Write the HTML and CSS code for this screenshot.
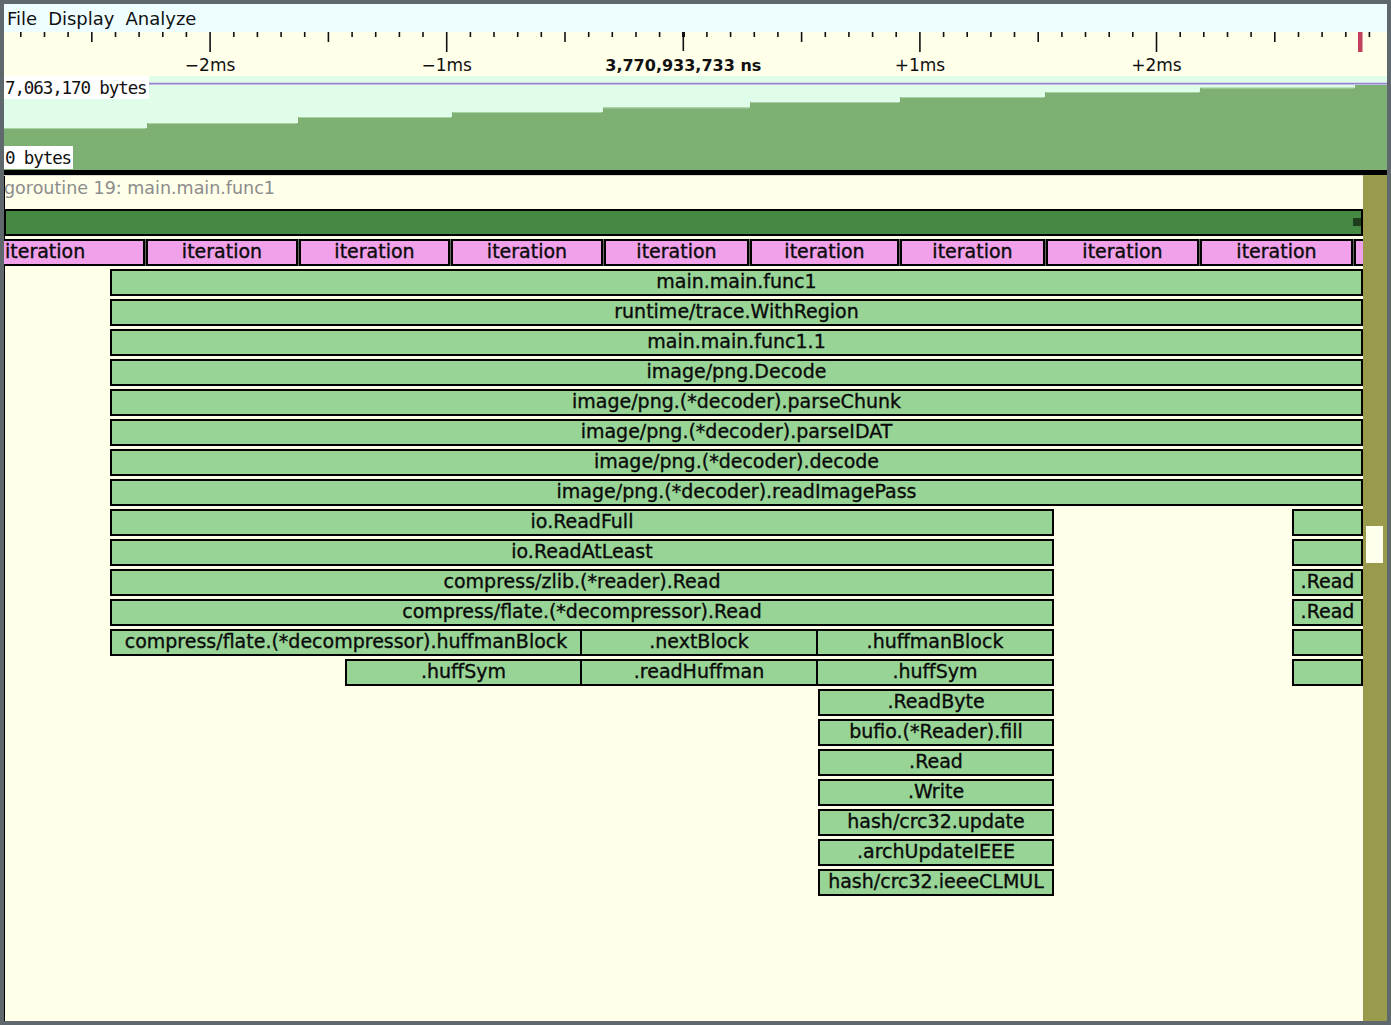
FILE: index.html
```html
<!DOCTYPE html>
<html>
<head>
<meta charset="utf-8">
<title>gotraceui</title>
<link rel="stylesheet" href="styles.css">
</head>
<body>
<div class="win">
  <div class="menu"><span>File</span><span>Display</span><span>Analyze</span></div>
  <div class="ruler">
    <svg class="ticks" width="1383" height="44" viewBox="0 0 1383 44">
      <g class="tk">
        <line x1="16.8" y1="0" x2="16.8" y2="5"/>
        <line x1="40.5" y1="0" x2="40.5" y2="5"/>
        <line x1="64.1" y1="0" x2="64.1" y2="5"/>
        <line x1="87.8" y1="0" x2="87.8" y2="10"/>
        <line x1="111.5" y1="0" x2="111.5" y2="5"/>
        <line x1="135.1" y1="0" x2="135.1" y2="5"/>
        <line x1="158.8" y1="0" x2="158.8" y2="5"/>
        <line x1="182.4" y1="0" x2="182.4" y2="5"/>
        <line x1="206.1" y1="0" x2="206.1" y2="20"/>
        <line x1="229.8" y1="0" x2="229.8" y2="5"/>
        <line x1="253.4" y1="0" x2="253.4" y2="5"/>
        <line x1="277.1" y1="0" x2="277.1" y2="5"/>
        <line x1="300.7" y1="0" x2="300.7" y2="5"/>
        <line x1="324.4" y1="0" x2="324.4" y2="10"/>
        <line x1="348.1" y1="0" x2="348.1" y2="5"/>
        <line x1="371.7" y1="0" x2="371.7" y2="5"/>
        <line x1="395.4" y1="0" x2="395.4" y2="5"/>
        <line x1="419.0" y1="0" x2="419.0" y2="5"/>
        <line x1="442.7" y1="0" x2="442.7" y2="20"/>
        <line x1="466.4" y1="0" x2="466.4" y2="5"/>
        <line x1="490.0" y1="0" x2="490.0" y2="5"/>
        <line x1="513.7" y1="0" x2="513.7" y2="5"/>
        <line x1="537.3" y1="0" x2="537.3" y2="5"/>
        <line x1="561.0" y1="0" x2="561.0" y2="10"/>
        <line x1="584.7" y1="0" x2="584.7" y2="5"/>
        <line x1="608.3" y1="0" x2="608.3" y2="5"/>
        <line x1="632.0" y1="0" x2="632.0" y2="5"/>
        <line x1="655.6" y1="0" x2="655.6" y2="5"/>
        <line x1="679.3" y1="0" x2="679.3" y2="19"/>
        <line x1="702.9" y1="0" x2="702.9" y2="5"/>
        <line x1="726.6" y1="0" x2="726.6" y2="5"/>
        <line x1="750.3" y1="0" x2="750.3" y2="5"/>
        <line x1="773.9" y1="0" x2="773.9" y2="5"/>
        <line x1="797.6" y1="0" x2="797.6" y2="10"/>
        <line x1="821.3" y1="0" x2="821.3" y2="5"/>
        <line x1="844.9" y1="0" x2="844.9" y2="5"/>
        <line x1="868.6" y1="0" x2="868.6" y2="5"/>
        <line x1="892.2" y1="0" x2="892.2" y2="5"/>
        <line x1="915.9" y1="0" x2="915.9" y2="20"/>
        <line x1="939.6" y1="0" x2="939.6" y2="5"/>
        <line x1="963.2" y1="0" x2="963.2" y2="5"/>
        <line x1="986.9" y1="0" x2="986.9" y2="5"/>
        <line x1="1010.5" y1="0" x2="1010.5" y2="5"/>
        <line x1="1034.2" y1="0" x2="1034.2" y2="10"/>
        <line x1="1057.9" y1="0" x2="1057.9" y2="5"/>
        <line x1="1081.5" y1="0" x2="1081.5" y2="5"/>
        <line x1="1105.2" y1="0" x2="1105.2" y2="5"/>
        <line x1="1128.8" y1="0" x2="1128.8" y2="5"/>
        <line x1="1152.5" y1="0" x2="1152.5" y2="20"/>
        <line x1="1176.2" y1="0" x2="1176.2" y2="5"/>
        <line x1="1199.8" y1="0" x2="1199.8" y2="5"/>
        <line x1="1223.5" y1="0" x2="1223.5" y2="5"/>
        <line x1="1247.1" y1="0" x2="1247.1" y2="5"/>
        <line x1="1270.8" y1="0" x2="1270.8" y2="10"/>
        <line x1="1294.5" y1="0" x2="1294.5" y2="5"/>
        <line x1="1318.1" y1="0" x2="1318.1" y2="5"/>
        <line x1="1341.8" y1="0" x2="1341.8" y2="5"/>
        <line x1="1365.4" y1="0" x2="1365.4" y2="5"/>
      </g>
      <rect class="center-tick" x="678" y="0" width="3" height="5"/>
      <rect class="marker" x="1354" y="0" width="4.5" height="20"/>
      <text class="rl" x="206.1" y="39">−2ms</text>
      <text class="rl" x="442.7" y="39">−1ms</text>
      <text class="rl rl-bold" x="679.3" y="39">3,770,933,733 ns</text>
      <text class="rl" x="915.9" y="39">+1ms</text>
      <text class="rl" x="1152.5" y="39">+2ms</text>
    </svg>
  </div>
  <div class="mem">
    <svg class="memsvg" width="1383" height="94" viewBox="0 0 1383 94">
      <line class="limit" x1="0" y1="7.6" x2="1383" y2="7.6"/>
      <polygon class="heap" points="0,52 143,52 143,47 294,47 294,41 448,41 448,36 599,36 599,31.5 746,31.5 746,26 896,26 896,21 1041,21 1041,16 1196,16 1196,11.7 1351,11.7 1351,9 1383,9 1383,94 0,94"/>
      <line class="heaptop" x1="0" y1="52.5" x2="142" y2="52.5"/>
      <line class="heaptop" x1="144" y1="47.5" x2="293" y2="47.5"/>
      <line class="heaptop" x1="295" y1="41.5" x2="447" y2="41.5"/>
      <line class="heaptop" x1="449" y1="36.5" x2="598" y2="36.5"/>
      <line class="heaptop" x1="600" y1="32" x2="745" y2="32"/>
      <line class="heaptop" x1="747" y1="26.5" x2="895" y2="26.5"/>
      <line class="heaptop" x1="897" y1="21.5" x2="1040" y2="21.5"/>
      <line class="heaptop" x1="1042" y1="16.5" x2="1195" y2="16.5"/>
      <line class="heaptop" x1="1197" y1="12.2" x2="1350" y2="12.2"/>
    </svg>
    <span class="memlabel top">7,063,170 bytes</span>
    <span class="memlabel bottom">0 bytes</span>
  </div>
  <div class="sep"></div>
  <div class="main">
    <div class="canvas">
      <div class="glabel">goroutine 19: main.main.func1</div>
      <div class="tracks">
        <div class="row"><div class="state" style="left:0;width:1359px"><span class="dot"></span></div></div>
        <div class="row iters">
          <div class="it first" style="left:0;width:141px">iteration</div>
          <div class="it" style="left:142px;width:152px">iteration</div>
          <div class="it" style="left:295px;width:151px">iteration</div>
          <div class="it" style="left:447px;width:152px">iteration</div>
          <div class="it" style="left:600px;width:145px">iteration</div>
          <div class="it" style="left:746px;width:149px">iteration</div>
          <div class="it" style="left:896px;width:145px">iteration</div>
          <div class="it" style="left:1042px;width:153px">iteration</div>
          <div class="it" style="left:1196px;width:153px">iteration</div>
          <div class="it" style="left:1350px;width:60px"></div>
        </div>
        <div class="row"><div class="sp" style="left:106px;width:1253px">main.main.func1</div></div>
        <div class="row"><div class="sp" style="left:106px;width:1253px">runtime/trace.WithRegion</div></div>
        <div class="row"><div class="sp" style="left:106px;width:1253px">main.main.func1.1</div></div>
        <div class="row"><div class="sp" style="left:106px;width:1253px">image/png.Decode</div></div>
        <div class="row"><div class="sp" style="left:106px;width:1253px">image/png.(*decoder).parseChunk</div></div>
        <div class="row"><div class="sp" style="left:106px;width:1253px">image/png.(*decoder).parseIDAT</div></div>
        <div class="row"><div class="sp" style="left:106px;width:1253px">image/png.(*decoder).decode</div></div>
        <div class="row"><div class="sp" style="left:106px;width:1253px">image/png.(*decoder).readImagePass</div></div>
        <div class="row">
          <div class="sp" style="left:106px;width:944px">io.ReadFull</div>
          <div class="sp" style="left:1288px;width:71px"></div>
        </div>
        <div class="row">
          <div class="sp" style="left:106px;width:944px">io.ReadAtLeast</div>
          <div class="sp" style="left:1288px;width:71px"></div>
        </div>
        <div class="row">
          <div class="sp" style="left:106px;width:944px">compress/zlib.(*reader).Read</div>
          <div class="sp" style="left:1288px;width:71px">.Read</div>
        </div>
        <div class="row">
          <div class="sp" style="left:106px;width:944px">compress/flate.(*decompressor).Read</div>
          <div class="sp" style="left:1288px;width:71px">.Read</div>
        </div>
        <div class="row">
          <div class="sp" style="left:106px;width:472px">compress/flate.(*decompressor).huffmanBlock</div>
          <div class="sp" style="left:576px;width:238px">.nextBlock</div>
          <div class="sp" style="left:812px;width:238px">.huffmanBlock</div>
          <div class="sp" style="left:1288px;width:71px"></div>
        </div>
        <div class="row">
          <div class="sp" style="left:341px;width:237px">.huffSym</div>
          <div class="sp" style="left:576px;width:238px">.readHuffman</div>
          <div class="sp" style="left:812px;width:238px">.huffSym</div>
          <div class="sp" style="left:1288px;width:71px"></div>
        </div>
        <div class="row"><div class="sp" style="left:814px;width:236px">.ReadByte</div></div>
        <div class="row"><div class="sp" style="left:814px;width:236px">bufio.(*Reader).fill</div></div>
        <div class="row"><div class="sp" style="left:814px;width:236px">.Read</div></div>
        <div class="row"><div class="sp" style="left:814px;width:236px">.Write</div></div>
        <div class="row"><div class="sp" style="left:814px;width:236px">hash/crc32.update</div></div>
        <div class="row"><div class="sp" style="left:814px;width:236px">.archUpdateIEEE</div></div>
        <div class="row"><div class="sp" style="left:814px;width:236px">hash/crc32.ieeeCLMUL</div></div>
      </div>
    </div>
    <div class="scroll"><div class="thumb"></div></div>
  </div>
</div>
</body>
</html>
```
FILE: styles.css
```css
html, body {
  margin: 0;
  padding: 0;
  background: #5f686c;
}
body {
  width: 1391px;
  height: 1025px;
  overflow: hidden;
  font-family: "DejaVu Sans", sans-serif;
}
.win {
  margin: 4px 4px 0 4px;
  width: 1383px;
  height: 1017px;
  display: flex;
  flex-direction: column;
  overflow: hidden;
}
.menu {
  height: 28px;
  background: #eefeff;
  display: flex;
  gap: 11px;
  padding-left: 3px;
  font-size: 18px;
  line-height: 29px;
  color: #111;
  flex: none;
}
.ruler {
  height: 44px;
  background: #ffffea;
  flex: none;
}
.ticks {
  display: block;
}
.tk line {
  stroke: #111;
  stroke-width: 1.6;
}
.center-tick {
  fill: #111;
}
.marker {
  fill: #c2405e;
}
.rl {
  font-family: "DejaVu Sans", sans-serif;
  font-size: 17px;
  fill: #111;
  text-anchor: middle;
}
.rl-bold {
  font-weight: bold;
  font-size: 16px;
}
.mem {
  height: 94px;
  background: #e0fde9;
  position: relative;
  flex: none;
}
.memsvg {
  display: block;
}
.limit {
  stroke: #9a80d6;
  stroke-width: 1.6;
}
.heap {
  fill: #7eb073;
}
.heaptop {
  stroke: #a9d2a3;
  stroke-width: 1;
}
.memlabel {
  position: absolute;
  left: 0;
  height: 23px;
  line-height: 24px;
  background: #ffffff;
  font-family: "DejaVu Sans Mono", monospace;
  font-size: 17.5px;
  letter-spacing: -1.1px;
  color: #111;
  padding: 0 2px 0 1px;
  overflow: hidden;
}
.memlabel.top {
  top: 0;
}
.memlabel.bottom {
  bottom: 1px;
  padding-right: 2px;
}
.sep {
  height: 5px;
  background: #000;
  flex: none;
}
.main {
  flex: 1;
  display: flex;
  min-height: 0;
}
.canvas {
  flex: 1;
  border-top: 1px solid #dcdcd0;
  background: linear-gradient(to right, #000 0, #000 1px, #ffffea 1px);
  overflow: hidden;
  position: relative;
}
.glabel {
  height: 30px;
  line-height: 24px;
  font-size: 17.5px;
  color: #8c8c8c;
  white-space: nowrap;
}
.tracks {
  margin-top: 3px;
  display: flex;
  flex-direction: column;
  gap: 3px;
}
.row {
  position: relative;
  height: 27px;
}
.row.iters {
  background: #666;
}
.state, .it, .sp {
  position: absolute;
  top: 0;
  height: 27px;
  box-sizing: border-box;
  border: 2px solid #000;
  white-space: nowrap;
  overflow: hidden;
  text-align: center;
  font-size: 19px;
  line-height: 21px;
  color: #0a0a0a;
  -webkit-text-stroke: 0.35px #0a0a0a;
}
.state {
  background: #458942;
}
.dot {
  position: absolute;
  right: 0;
  top: 7px;
  width: 8px;
  height: 8px;
  background: #1f3d1d;
}
.it {
  background: #f0a1e9;
}
.it.first {
  text-align: left;
  border-left: none;
  padding-left: 1px;
}
.sp {
  background: #99d497;
}
.scroll {
  width: 24px;
  flex: none;
  background: #999a4b;
  position: relative;
}
.thumb {
  position: absolute;
  left: 3px;
  top: 351px;
  width: 17px;
  height: 37px;
  background: #ffffee;
}
```
